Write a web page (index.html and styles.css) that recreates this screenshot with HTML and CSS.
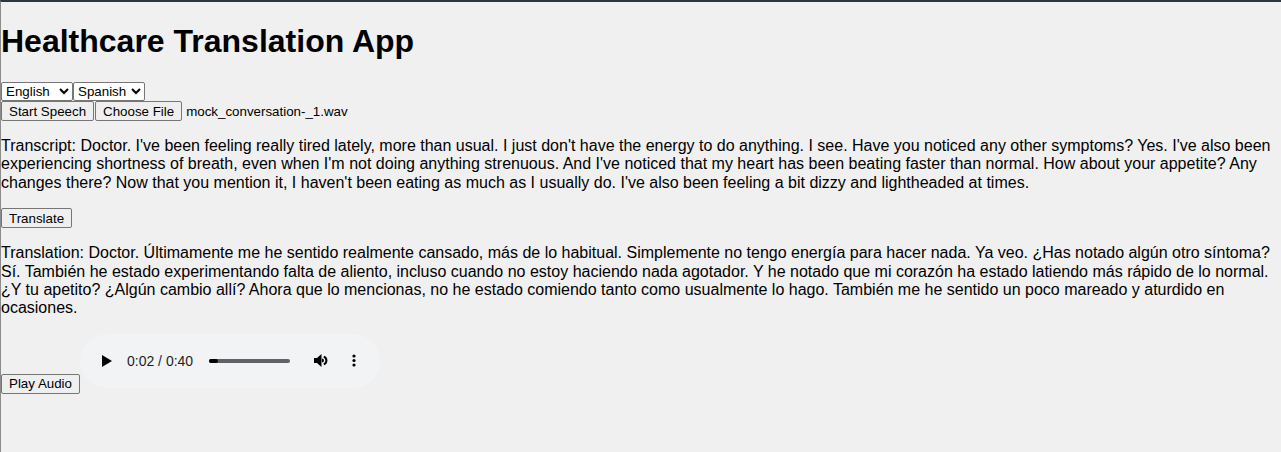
FILE: index.html
```html
<!DOCTYPE html>
<html>
<head>
<meta charset="utf-8">
<link rel="stylesheet" href="styles.css">
</head>
<body>
<div class="app">
  <h1 class="title">Healthcare Translation App</h1>
  <div class="row">
    <select class="ctl"><option>English</option></select><select class="ctl"><option>Spanish</option></select>
  </div>
  <div class="row">
    <button class="btn">Start Speech</button><button class="btn file-btn">Choose File</button><span class="fname">mock_conversation-_1.wav</span>
  </div>
  <p class="text">Transcript: Doctor. I've been feeling really tired lately, more than usual. I just don't have the energy to do anything. I see. Have you noticed any other symptoms? Yes. I've also been experiencing shortness of breath, even when I'm not doing anything strenuous. And I've noticed that my heart has been beating faster than normal. How about your appetite? Any changes there? Now that you mention it, I haven't been eating as much as I usually do. I've also been feeling a bit dizzy and lightheaded at times.</p>
  <div class="row"><button class="btn">Translate</button></div>
  <p class="text">Translation: Doctor. Últimamente me he sentido realmente cansado, más de lo habitual. Simplemente no tengo energía para hacer nada. Ya veo. ¿Has notado algún otro síntoma? Sí. También he estado experimentando falta de aliento, incluso cuando no estoy haciendo nada agotador. Y he notado que mi corazón ha estado latiendo más rápido de lo normal. ¿Y tu apetito? ¿Algún cambio allí? Ahora que lo mencionas, no he estado comiendo tanto como usualmente lo hago. También me he sentido un poco mareado y aturdido en ocasiones.</p>
  <div class="player-row"><button class="btn play-btn">Play Audio</button><div class="audio">
      <svg class="play" width="10" height="12" viewBox="0 0 10 12"><path d="M0 0 L10 6 L0 12 Z" fill="#000"/></svg>
      <span class="time">0:02 / 0:40</span>
      <span class="track"><span class="fill"></span></span>
      <svg class="vol" width="16" height="13" viewBox="0 0 16 13"><path d="M0 4 H3 L7.5 0 V13 L3 9 H0 Z" fill="#000"/><path d="M9.8 2.6 A4.2 4.2 0 0 1 9.8 10.4" stroke="#000" stroke-width="2" fill="none"/><path d="M8 4.5 A2 2 0 0 1 8 8.5 Z" fill="#000"/></svg>
      <svg class="more" width="4" height="13" viewBox="0 0 4 13"><circle cx="2" cy="2" r="1.6" fill="#000"/><circle cx="2" cy="6.5" r="1.6" fill="#000"/><circle cx="2" cy="11" r="1.6" fill="#000"/></svg>
  </div></div>
</div>
</body>
</html>
```

FILE: styles.css
```css
html {
  background: #f0f0f0;
}
body {
  margin: 0;
  min-height: 450px;
  border-top: 2px solid #2e373d;
  border-left: 1px solid #8c8c8c;
  background: #f0f0f0;
  font-family: "Liberation Sans", Arial, sans-serif;
  font-size: 16px;
  color: #000;
}
.title {
  font-size: 32px;
  font-weight: bold;
  margin: 21px 0 22px 0;
}
.row {
  display: flex;
  align-items: center;
}
.ctl {
  font-family: "Liberation Sans", Arial, sans-serif;
  font-size: 13.333px;
  width: 72px;
  height: 19px;
  margin: 0;
  background: #fff;
  border: 1px solid #767676;
  border-radius: 2px;
  color: #000;
}
.btn {
  font-family: "Liberation Sans", Arial, sans-serif;
  font-size: 13.333px;
  box-sizing: border-box;
  height: 20px;
  margin: 0;
  padding: 0 7px;
  background: #efefef;
  border: 1px solid #767676;
  border-radius: 2px;
  color: #000;
}
.file-btn {
  margin-left: 1px;
}
.fname {
  font-size: 13.333px;
  margin-left: 4px;
}
.text {
  margin: 16px 0;
  line-height: 18.4px;
}
.player-row {
  display: flex;
  align-items: flex-start;
}
.play-btn {
  margin-top: 40px;
}
.audio {
  display: flex;
  align-items: center;
  box-sizing: border-box;
  width: 300px;
  height: 54px;
  padding-left: 22px;
  border-radius: 27px;
  background: #f1f3f4;
}
.play {
  margin-right: 15px;
}
.time {
  font-size: 14px;
  color: #1f1f1f;
  width: 82px;
  flex: none;
}
.track {
  display: block;
  width: 81px;
  height: 4px;
  border-radius: 2px;
  background: #5f6368;
  margin-right: 24px;
}
.fill {
  display: block;
  width: 9px;
  height: 4px;
  border-radius: 2px;
  background: #000;
}
.vol {
  margin-right: 22px;
}
```
